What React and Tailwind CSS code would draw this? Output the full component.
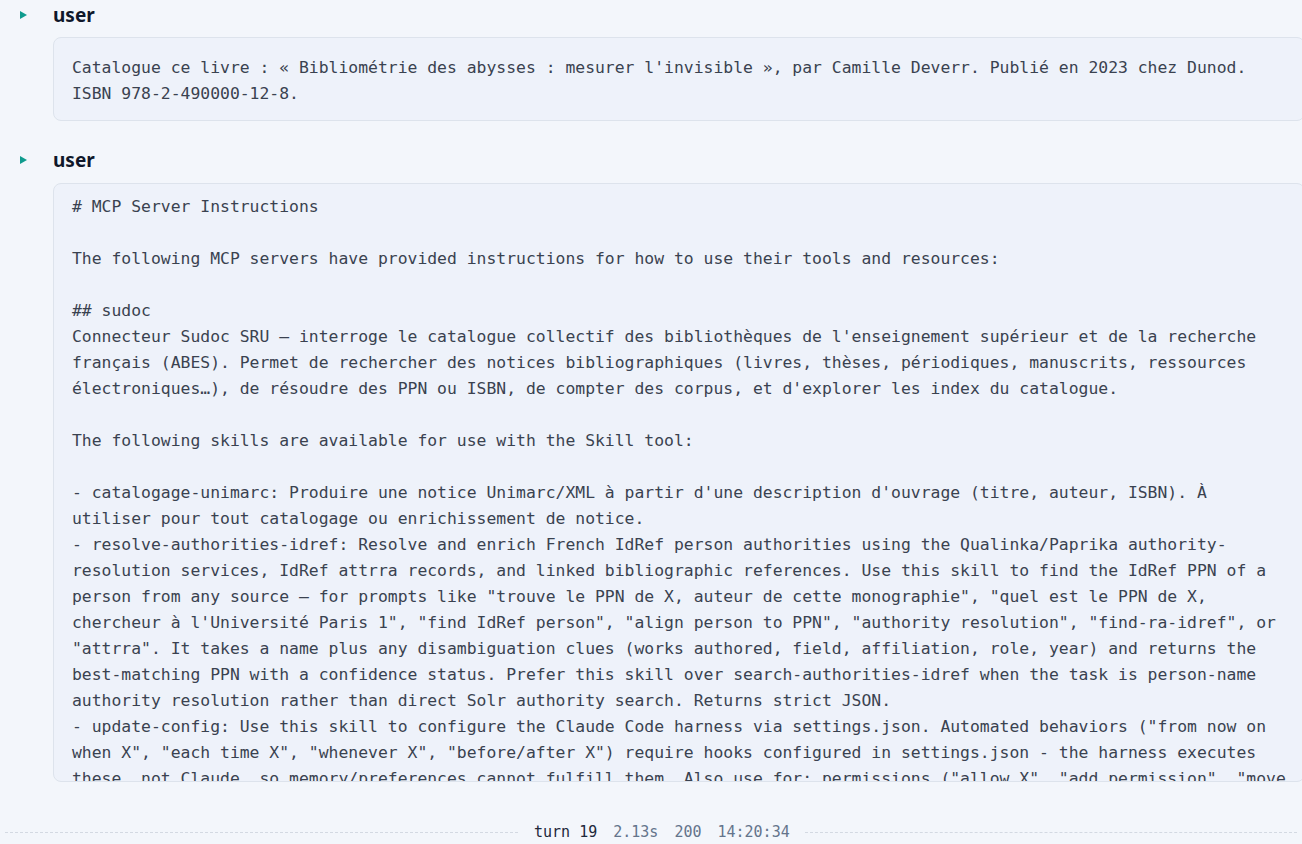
import React from "react";

const firstMessage =
  "Catalogue ce livre : « Bibliométrie des abysses : mesurer l'invisible », par Camille Deverr. Publié en 2023 chez Dunod. ISBN 978-2-490000-12-8.";

const secondMessage = `# MCP Server Instructions

The following MCP servers have provided instructions for how to use their tools and resources:

## sudoc
Connecteur Sudoc SRU — interroge le catalogue collectif des bibliothèques de l'enseignement supérieur et de la recherche français (ABES). Permet de rechercher des notices bibliographiques (livres, thèses, périodiques, manuscrits, ressources électroniques…), de résoudre des PPN ou ISBN, de compter des corpus, et d'explorer les index du catalogue.

The following skills are available for use with the Skill tool:

- catalogage-unimarc: Produire une notice Unimarc/XML à partir d'une description d'ouvrage (titre, auteur, ISBN). À utiliser pour tout catalogage ou enrichissement de notice.
- resolve-authorities-idref: Resolve and enrich French IdRef person authorities using the Qualinka/Paprika authority-resolution services, IdRef attrra records, and linked bibliographic references. Use this skill to find the IdRef PPN of a person from any source — for prompts like "trouve le PPN de X, auteur de cette monographie", "quel est le PPN de X, chercheur à l'Université Paris 1", "find IdRef person", "align person to PPN", "authority resolution", "find-ra-idref", or "attrra". It takes a name plus any disambiguation clues (works authored, field, affiliation, role, year) and returns the best-matching PPN with a confidence status. Prefer this skill over search-authorities-idref when the task is person-name authority resolution rather than direct Solr authority search. Returns strict JSON.
- update-config: Use this skill to configure the Claude Code harness via settings.json. Automated behaviors ("from now on when X", "each time X", "whenever X", "before/after X") require hooks configured in settings.json - the harness executes these, not Claude, so memory/preferences cannot fulfill them. Also use for: permissions ("allow X", "add permission", "move permission to"), env vars ("set X=Y"), hook troubleshooting, or any changes to settings.json/settings.local.json files.`;

const Caret = () => (
  <svg width="7" height="8" viewBox="0 0 7 8" className="shrink-0">
    <polygon points="0,0 7,4 0,8" fill="#0f9b8e" />
  </svg>
);

const MessageHeader = ({ role }) => (
  <div className="flex items-center h-[22px]">
    <div className="w-[53px] pl-[20px] flex items-center">
      <Caret />
    </div>
    <span className="font-['Noto_Sans',sans-serif] font-bold text-[19px] leading-[22px] text-[#0f172a]">
      {role}
    </span>
  </div>
);

const MessageBox = ({ children, className }) => (
  <div
    className={
      "ml-[53px] w-[1252px] shrink-0 rounded-lg border border-[#dde3ec] bg-[#eef2fa] px-[18px] overflow-hidden " +
      "font-['DejaVu_Sans_Mono',monospace] text-[16.4px] leading-[26px] text-[#3a4250] whitespace-pre-wrap " +
      className
    }
  >
    {children}
  </div>
);

export default function App() {
  return (
    <div className="w-[1302px] h-[844px] overflow-hidden bg-[#f3f6fb]">
      {/* first turn */}
      <div className="pt-[4px]">
        <MessageHeader role="user" />
        <MessageBox className="mt-[11px] pt-[17px] pb-[13px]">{firstMessage}</MessageBox>
      </div>

      {/* second turn */}
      <div className="pt-[28px]">
        <MessageHeader role="user" />
        <MessageBox className="mt-[12px] pt-[10px] h-[599px]">{secondMessage}</MessageBox>
      </div>

      {/* footer meta */}
      <div className="flex items-center px-[5px] mt-[40px] h-[20px]">
        <div className="w-[513px] border-t border-dashed border-[#d3d9e2]" />
        <div className="flex items-center gap-[16px] ml-[16px] mr-[15px] font-['DejaVu_Sans_Mono',monospace] text-[15px] leading-[20px]">
          <span className="text-[#1e293b] font-medium">turn 19</span>
          <span className="text-[#64748b]">2.13s</span>
          <span className="text-[#64748b]">200</span>
          <span className="text-[#64748b]">14:20:34</span>
        </div>
        <div className="flex-1 border-t border-dashed border-[#d3d9e2]" />
      </div>
    </div>
  );
}
